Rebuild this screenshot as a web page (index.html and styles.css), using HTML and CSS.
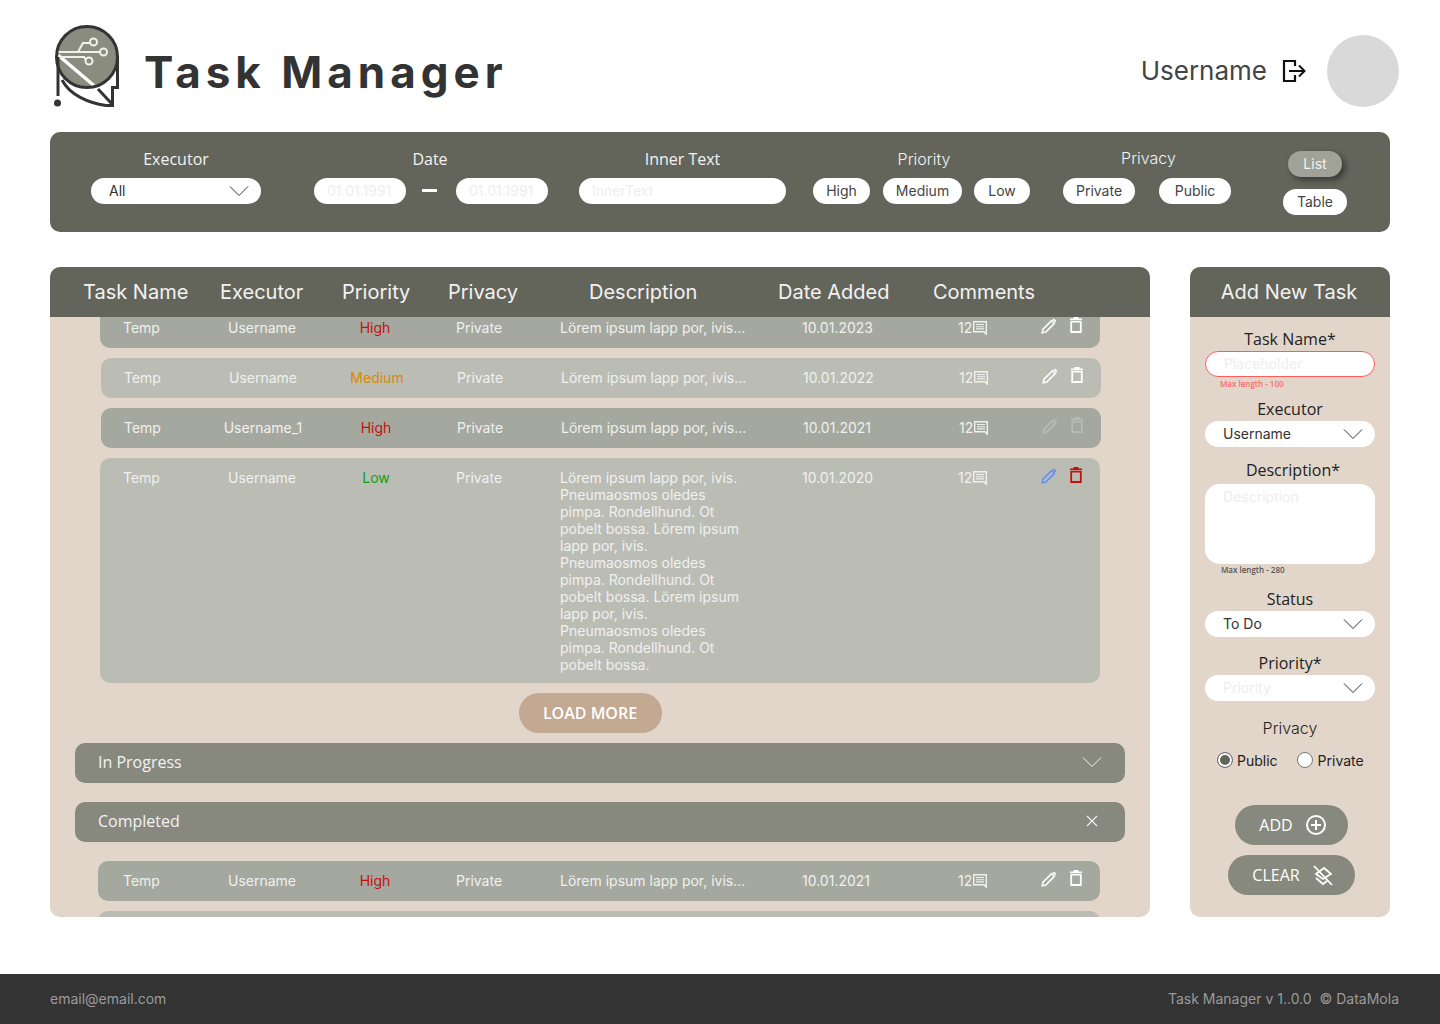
FILE: index.html
```html
<!DOCTYPE html>
<html lang="en">

<head>
    <meta charset="UTF-8">
    <meta name="viewport" content="width=device-width, initial-scale=1.0">
    <title>Task Manager</title>
    <link rel="stylesheet" href="styles.css">
</head>

<body>
    <svg class="sprite" width="0" height="0">
        <symbol id="i-chevron" viewBox="0 0 20 12">
            <path d="M1 1.5 L10 10.5 L19 1.5" fill="none" stroke="currentColor" stroke-width="1" />
        </symbol>
        <symbol id="i-pencil" viewBox="0 0 16 16">
            <path d="M1.2 14.8 L2 11.2 L10.6 2.7 L13.3 5.4 L4.8 14 Z" fill="none" stroke="currentColor" stroke-width="1.6" />
            <path d="M11.6 1.7 L12.9 0.5 L15.5 3.1 L14.3 4.4 Z" fill="currentColor" />
        </symbol>
        <symbol id="i-trash" viewBox="0 0 14 16">
            <path d="M2.2 4.6 H11.8 V15 H2.2 Z" fill="none" stroke="currentColor" stroke-width="1.8" />
            <path d="M1 2.2 H13 M4.5 0.8 H9.5" fill="none" stroke="currentColor" stroke-width="1.5" />
        </symbol>
        <symbol id="i-comment" viewBox="0 0 14 14">
            <path d="M0.7 0.7 H13.3 V13.3 L11 10.7 H0.7 Z" fill="none" stroke="currentColor" stroke-width="1.4" />
            <path d="M3 3.5 H11 M3 5.7 H11 M3 7.9 H11" fill="none" stroke="currentColor" stroke-width="1.1" />
        </symbol>
    </svg>

    <header class="top">
        <svg class="logo" width="76" height="92" viewBox="50 20 76 92">
            <circle cx="87" cy="57" r="29.500" fill="#8a8c80" />
            <path d="M58 55 L98 89" fill="none" stroke="#fff" stroke-width="3.5" />
            <g fill="none" stroke="#f1f1ec" stroke-width="2">
                <path d="M58 52 H78 L83 43 H90" />
                <path d="M78 52 H100" />
                <path d="M60 57 H84 L86 60" />
                <circle cx="93.500" cy="42" r="3.500" />
                <circle cx="103.500" cy="52" r="3.500" />
                <circle cx="89" cy="61" r="3.500" />
            </g>
            <g fill="none" stroke="#333" stroke-width="3">
                <circle cx="87" cy="57" r="30.500" />
                <path d="M117.500 57 V87.500 H112.500 V105.500 H106 C88 103 70 95 62 80" />
                <path d="M58 57 V96" />
                <path d="M98 89 L112 104" />
            </g>
            <circle cx="57.500" cy="103" r="3.500" fill="#333" />
        </svg>
        <h1 class="app-title">Task Manager</h1>
        <div class="user">
            <span class="user-name">Username</span>
            <svg class="logout" width="25" height="24" viewBox="0 0 25 24">
                <path d="M13 7 V2 H2 V22 H13 V16" fill="none" stroke="#111" stroke-width="2.2" />
                <path d="M7 12 H22 M17 6.500 L22.500 12 L17 17.500" fill="none" stroke="#111" stroke-width="2" />
            </svg>
            <div class="avatar"></div>
        </div>
    </header>

    <section class="filters">
        <div class="filter f-executor">
            <label class="filter-label">Executor</label>
            <div class="select select-wide">
                <span>All</span>
                <svg class="chev"><use href="#i-chevron" /></svg>
            </div>
        </div>
        <div class="filter f-date">
            <label class="filter-label label-date">Date</label>
            <div class="filter-line">
                <input class="field field-date" type="text" placeholder="01.01.1991">
                <span class="dash"></span>
                <input class="field field-date" type="text" placeholder="01.01.1991">
            </div>
        </div>
        <div class="filter f-text">
            <label class="filter-label">Inner Text</label>
            <input class="field field-text" type="text" placeholder="InnerText">
        </div>
        <div class="filter f-priority">
            <label class="filter-label inter label-priority">Priority</label>
            <div class="filter-line pills-priority">
                <button class="pill pill-high" type="button">High</button>
                <button class="pill pill-medium" type="button">Medium</button>
                <button class="pill pill-low" type="button">Low</button>
            </div>
        </div>
        <div class="filter f-privacy">
            <label class="filter-label inter raised">Privacy</label>
            <div class="filter-line pills-privacy">
                <button class="pill pill-privacy" type="button">Private</button>
                <button class="pill pill-privacy" type="button">Public</button>
            </div>
        </div>
        <div class="view-switch">
            <button class="pill pill-list" type="button">List</button>
            <button class="pill pill-table" type="button">Table</button>
        </div>
    </section>

    <main class="content">
        <section class="tasks">
            <div class="tasks-head">
                <span>Task Name</span>
                <span>Executor</span>
                <span>Priority</span>
                <span>Privacy</span>
                <span>Description</span>
                <span>Date Added</span>
                <span>Comments</span>
            </div>
            <div class="tasks-body">
                <div class="task dark first">
                    <span>Temp</span><span class="mid">Username</span><span class="mid high">High</span><span class="priv">Private</span>
                    <span>Lörem ipsum lapp por, ivis...</span><span>10.01.2023</span>
                    <span class="count">12<svg class="cmt"><use href="#i-comment" /></svg></span>
                    <span class="acts"><svg class="pen"><use href="#i-pencil" /></svg><svg class="bin"><use href="#i-trash" /></svg></span>
                </div>
                <div class="task light shift">
                    <span>Temp</span><span class="mid">Username</span><span class="mid medium">Medium</span><span class="priv">Private</span>
                    <span>Lörem ipsum lapp por, ivis...</span><span>10.01.2022</span>
                    <span class="count">12<svg class="cmt"><use href="#i-comment" /></svg></span>
                    <span class="acts"><svg class="pen"><use href="#i-pencil" /></svg><svg class="bin"><use href="#i-trash" /></svg></span>
                </div>
                <div class="task dark shift">
                    <span>Temp</span><span class="mid">Username_1</span><span class="mid high">High</span><span class="priv">Private</span>
                    <span>Lörem ipsum lapp por, ivis...</span><span>10.01.2021</span>
                    <span class="count">12<svg class="cmt"><use href="#i-comment" /></svg></span>
                    <span class="acts disabled"><svg class="pen"><use href="#i-pencil" /></svg><svg class="bin"><use href="#i-trash" /></svg></span>
                </div>
                <div class="task light open">
                    <span>Temp</span><span class="mid">Username</span><span class="mid low">Low</span><span class="priv">Private</span>
                    <span class="desc">Lörem ipsum lapp por, ivis. Pneumaosmos oledes pimpa. Rondellhund. Ot pobelt bossa. Lörem ipsum lapp por, ivis.<br>Pneumaosmos oledes pimpa. Rondellhund. Ot pobelt bossa. Lörem ipsum lapp por, ivis.<br>Pneumaosmos oledes pimpa. Rondellhund. Ot pobelt bossa.</span>
                    <span>10.01.2020</span>
                    <span class="count">12<svg class="cmt"><use href="#i-comment" /></svg></span>
                    <span class="acts active"><svg class="pen"><use href="#i-pencil" /></svg><svg class="bin"><use href="#i-trash" /></svg></span>
                </div>

                <button class="load-more" type="button">LOAD MORE</button>

                <div class="group group-progress">
                    <span>In Progress</span>
                    <svg class="chev"><use href="#i-chevron" /></svg>
                </div>
                <div class="group group-done">
                    <span>Completed</span>
                    <svg class="close" width="14" height="14" viewBox="0 0 14 14"><path d="M2 2 L12 12 M12 2 L2 12" fill="none" stroke="currentColor" stroke-width="1.1" /></svg>
                </div>

                <div class="task dark last">
                    <span>Temp</span><span class="mid">Username</span><span class="mid high">High</span><span class="priv">Private</span>
                    <span>Lörem ipsum lapp por, ivis...</span><span>10.01.2021</span>
                    <span class="count">12<svg class="cmt"><use href="#i-comment" /></svg></span>
                    <span class="acts"><svg class="pen"><use href="#i-pencil" /></svg><svg class="bin"><use href="#i-trash" /></svg></span>
                </div>
                <div class="task light last next"></div>
            </div>
        </section>

        <aside class="add-task">
            <h2 class="add-title">Add New Task</h2>
            <form class="add-form">
                <label class="form-label">Task Name*</label>
                <input class="field form-field invalid" type="text" placeholder="Placeholder">
                <p class="hint hint-error">Max length - 100</p>

                <label class="form-label l-executor">Executor</label>
                <div class="select form-select"><span>Username</span><svg class="chev"><use href="#i-chevron" /></svg></div>

                <label class="form-label l-desc">Description*</label>
                <textarea class="form-area" placeholder="Description"></textarea>
                <p class="hint">Max length - 280</p>

                <label class="form-label l-status">Status</label>
                <div class="select form-select"><span>To Do</span><svg class="chev"><use href="#i-chevron" /></svg></div>

                <label class="form-label l-priority">Priority*</label>
                <div class="select form-select"><span class="muted">Priority</span><svg class="chev"><use href="#i-chevron" /></svg></div>

                <label class="form-label l-privacy inter">Privacy</label>
                <div class="radios">
                    <span class="radio checked"></span><span class="radio-text">Public</span>
                    <span class="radio second"></span><span class="radio-text text-second">Private</span>
                </div>

                <button class="action action-add" type="button">
                    ADD
                    <svg width="22" height="22" viewBox="0 0 22 22"><circle cx="11" cy="11" r="9" fill="none" stroke="currentColor" stroke-width="2" /><path d="M11 6 V16 M6 11 H16" fill="none" stroke="currentColor" stroke-width="2" /></svg>
                </button>
                <button class="action action-clear" type="button">
                    CLEAR
                    <svg width="22" height="22" viewBox="0 0 22 22"><path d="M4 10 L12 4 L19 10 L11 15 Z M4 14 L11 20 L15 17 M2 2 L20 21" fill="none" stroke="currentColor" stroke-width="1.800" /></svg>
                </button>
            </form>
        </aside>
    </main>

    <footer class="bottom">
        <span>email@email.com</span>
        <span>Task Manager v 1..0.0 &nbsp;© DataMola</span>
    </footer>
</body>

</html>
```

FILE: styles.css
```css
* {
    box-sizing: border-box;
}

body {
    font-family: 'Inter', sans-serif;
    background: #fff;
    color: #333;
    margin: 0;
    height: 1024px;
    display: flex;
    flex-direction: column;
    overflow: hidden;
}

.sprite {
    display: block;
    height: 0;
}

input,
textarea,
button {
    font-family: inherit;
    border: none;
    outline: none;
}

input::placeholder,
textarea::placeholder {
    color: #eee;
}

.inter {
    font-family: 'Inter', sans-serif !important;
}

/* header */
.top {
    height: 132px;
    padding: 20px 41px 20px 50px;
    display: flex;
    align-items: flex-start;
}

.app-title {
    margin: 16px 0 0 18px;
    font-size: 44px;
    line-height: 72px;
    height: 72px;
    font-weight: 700;
    letter-spacing: 5px;
    color: #333;
}

.user {
    margin: 15px 0 0 auto;
    display: flex;
    align-items: center;
}

.user-name {
    margin-bottom: 2px;
    font-size: 26px;
    color: #444;
}

.logout {
    margin-left: 15px;
}

.avatar {
    width: 72px;
    height: 72px;
    margin-left: 20px;
    border-radius: 50%;
    background: #d9d9d9;
}

/* filter bar */
.filters {
    height: 100px;
    margin: 0 50px;
    padding-left: 41px;
    background: #63655b;
    border-radius: 10px;
    display: flex;
}

.filter {
    padding-top: 16px;
    display: flex;
    flex-direction: column;
    align-items: center;
}

.filter-label {
    font-family: 'Open Sans', sans-serif;
    font-size: 16px;
    line-height: 22px;
    height: 30px;
    color: #f2f2f2;
    font-weight: 400;
}

.filter-label.inter {
    font-weight: 350;
    padding-left: 3px;
}

.filter-label.label-priority {
    padding-left: 5px;
}

.filter-label.label-date {
    padding-right: 2px;
}

.filter-label.raised {
    margin-top: -1px;
    height: 31px;
}

.filter-line {
    display: flex;
    align-items: center;
}

.f-date {
    margin-left: 53px;
}

.f-text {
    margin-left: 31px;
}

.f-priority {
    margin-left: 27px;
}

.f-privacy {
    margin-left: 33px;
}

.select {
    height: 26px;
    background: #fff;
    border-radius: 13px;
    display: flex;
    align-items: center;
    justify-content: space-between;
    font-size: 14px;
    color: #333;
    padding: 0 12px 1px 18px;
}

.select-wide {
    width: 170px;
}

.chev {
    width: 20px;
    height: 12px;
    color: #333;
}

.field {
    height: 26px;
    background: #fff;
    border-radius: 13px;
    font-size: 14px;
    padding: 0 13px 2px;
}

.field-date {
    width: 92px;
}

.dash {
    width: 15px;
    height: 3px;
    margin: 0 19px 2px 16px;
    background: #fff;
}

.field-text {
    width: 207px;
}

.pill {
    height: 26px;
    padding: 0 0 2px;
    background: #fff;
    border-radius: 13px;
    color: #444;
    font-size: 14px;
    text-align: center;
}

.pill-high {
    width: 57px;
}

.pill-medium {
    width: 79px;
    margin: 0 12px 0 13px;
}

.pill-low {
    width: 56px;
}

.pill-privacy {
    width: 72px;
}

.pills-privacy {
    gap: 24px;
}

.view-switch {
    margin-left: 52px;
    padding-top: 19px;
    display: flex;
    flex-direction: column;
    align-items: center;
    gap: 12px;
}

.pill-list {
    width: 54px;
    background: #a0a298;
    color: #f2f2f2;
    box-shadow: 3px 3px 6px rgba(0, 0, 0, 0.45);
}

.pill-table {
    width: 64px;
}

/* main area */
.content {
    height: 650px;
    margin: 35px 0 0 50px;
    display: flex;
    gap: 40px;
}

.tasks {
    width: 1100px;
    background: #e2d6ca;
    border-radius: 10px;
    overflow: hidden;
    display: flex;
    flex-direction: column;
}

.tasks-head {
    height: 50px;
    flex: none;
    position: relative;
    z-index: 1;
    padding-left: 33px;
    background: #63655b;
    color: #f2f2f2;
    font-size: 20px;
    display: grid;
    grid-template-columns: 137px 122px 106px 141px 189px 155px 1fr;
    align-items: center;
}

.tasks-body {
    flex: 1;
    overflow: hidden;
    display: flex;
    flex-direction: column;
}

.task {
    width: 1000px;
    min-height: 40px;
    flex: none;
    margin-left: 50px;
    margin-bottom: 10px;
    padding: 11px 0 0 23px;
    border-radius: 10px;
    color: #f0f0ee;
    font-size: 14px;
    line-height: 17px;
    display: grid;
    grid-template-columns: 79px 120px 106px 132px 242px 156px 83px 1fr;
    align-items: start;
}

.task.first {
    margin-top: -9px;
}

.task.shift {
    margin-left: 51px;
}

.task.open {
    height: 225px;
}

.task.last {
    margin-left: 48px;
    width: 1002px;
    padding-left: 25px;
}

.dark {
    background: #a5a89e;
}

.light {
    background: #bbbdb5;
}

.mid {
    text-align: center;
}

.priv {
    padding-left: 28px;
}

.high {
    color: #c80f0f;
}

.medium,
.low {
    color: #d98a00;
    padding-left: 2px;
}

.low {
    color: #0fa00f;
}

.desc {
    width: 190px;
}

.count {
    display: flex;
    align-items: flex-start;
}

.cmt {
    width: 14px;
    height: 14px;
    margin: 2px 0 0 1px;
}

.acts {
    display: flex;
    gap: 12px;
    color: #fff;
    margin-top: -1px;
}

.pen {
    width: 16px;
    height: 16px;
}

.bin {
    width: 14px;
    height: 16px;
    margin-top: -1px;
}

.acts.disabled {
    color: #b9bbb3;
}

.acts.active .pen {
    color: #5f8ff0;
}

.acts.active .bin {
    color: #c80f0f;
}

.load-more {
    width: 143px;
    height: 40px;
    flex: none;
    margin: 0 0 10px 469px;
    padding: 0 1px 0 0;
    border-radius: 20px;
    background: #c3a892;
    color: #fff;
    font-family: 'Open Sans', sans-serif;
    font-size: 16px;
    font-weight: 600;
}

.group {
    width: 1050px;
    height: 40px;
    flex: none;
    margin-left: 25px;
    padding: 0 23px 2px;
    border-radius: 10px;
    background: #88897e;
    color: #f2f2f2;
    font-family: 'Open Sans', sans-serif;
    font-size: 16px;
    display: flex;
    align-items: center;
    justify-content: space-between;
}

.group .chev {
    color: #f2f2f2;
}

.group-progress {
    margin-bottom: 19px;
}

.group-done {
    margin-bottom: 19px;
}

.close {
    margin-right: 3px;
}

/* add task panel */
.add-task {
    width: 200px;
    background: #e2d6ca;
    border-radius: 10px;
    overflow: hidden;
}

.add-title {
    height: 50px;
    margin: 0;
    padding-right: 2px;
    background: #63655b;
    color: #f2f2f2;
    font-size: 20px;
    font-weight: 400;
    line-height: 50px;
    text-align: center;
}

.add-form {
    padding: 11px 15px 0;
    display: flex;
    flex-direction: column;
}

.form-label {
    height: 23px;
    font-family: 'Open Sans', sans-serif;
    font-size: 16px;
    line-height: 22px;
    color: #222;
    text-align: center;
}

.form-field {
    width: 170px;
    flex: none;
    padding-left: 18px;
}

.invalid {
    border: 1px solid #ff5c5c;
}

.hint {
    height: 14px;
    margin: 0;
    padding: 1px 0 0 16px;
    font-family: 'Open Sans', sans-serif;
    font-size: 8px;
    font-weight: 600;
    line-height: 10px;
    color: #555;
}

.hint-error {
    color: #ff6b6b;
    padding: 2px 0 0 15px;
    height: 21px;
    font-weight: 600;
}

.form-select {
    padding-left: 18px;
    flex: none;
}

.muted {
    color: #eee;
}

.l-desc {
    margin-top: 12px;
    height: 25px;
    padding-left: 6px;
}

.form-area {
    width: 170px;
    height: 80px;
    flex: none;
    padding: 4px 18px;
    resize: none;
    border-radius: 15px;
    font-size: 14px;
    line-height: 18px;
    background: #fff;
}

.l-status {
    margin-top: 10px;
}

.l-priority {
    margin-top: 15px;
}

.l-privacy {
    margin-top: 16px;
    font-weight: 350;
}

.radios {
    height: 22px;
    margin-top: 9px;
    padding-left: 12px;
    display: flex;
    align-items: center;
    font-size: 14px;
    color: #222;
}

.radio {
    width: 16px;
    height: 16px;
    flex: none;
    border-radius: 50%;
    background: #fff;
    border: 1px solid #777;
}

.radio.checked {
    background: #63655b;
    box-shadow: inset 0 0 0 2px #fff;
}

.radio.second {
    margin-left: 19px;
}

.radio-text {
    margin-left: 4px;
}

.radio-text.text-second {
    margin-left: 5px;
}

.action {
    height: 40px;
    flex: none;
    padding: 0 0 0 3px;
    border-radius: 20px;
    background: #88897e;
    color: #fff;
    font-family: 'Open Sans', sans-serif;
    font-size: 16px;
    font-weight: 500;
    display: flex;
    align-items: center;
    justify-content: center;
    gap: 12px;
}

.action-add {
    width: 113px;
    margin: 34px 0 10px 30px;
}

.action-clear {
    width: 127px;
    margin-left: 23px;
}

/* footer */
.bottom {
    height: 50px;
    margin-top: auto;
    padding: 0 41px 2px 50px;
    background: #333;
    color: #9a9a9a;
    font-size: 14px;
    display: flex;
    align-items: center;
    justify-content: space-between;
}
```
